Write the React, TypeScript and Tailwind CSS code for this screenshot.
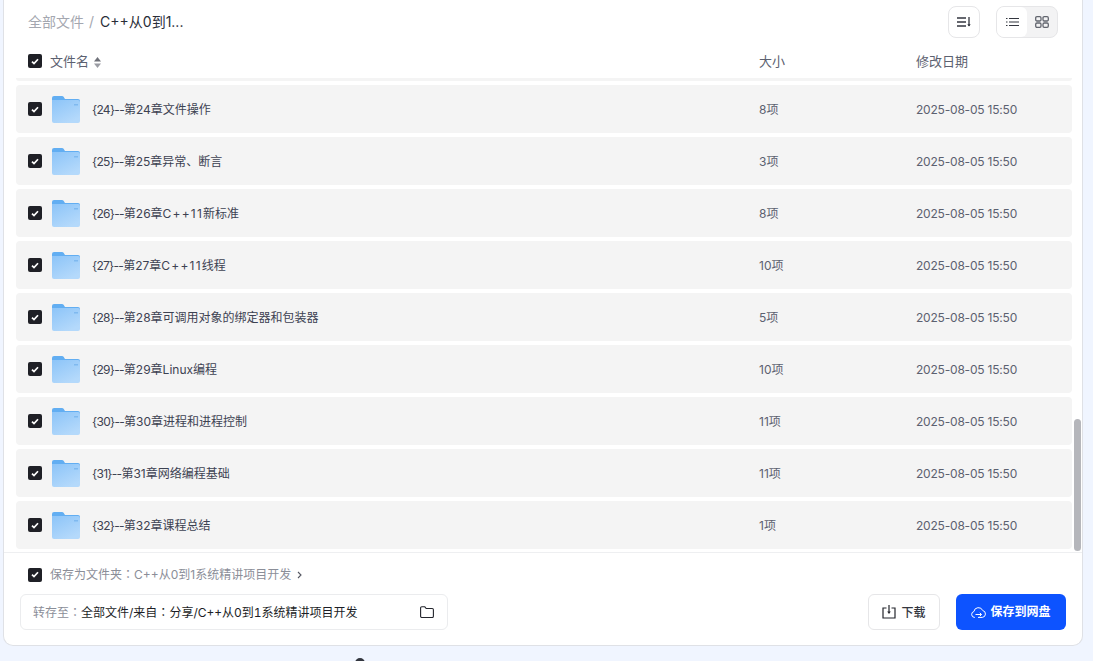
import { useState, type ReactNode } from 'react'

const FONT = "font-['Inter','Noto_Sans_CJK_SC',sans-serif]"

// digits and plus signs run wider in the reference than Inter sets them
const cpp11 = <span className="tracking-[1.2px]">C++11</span>

const rows: { id: string; name: ReactNode; size: string }[] = [
  { id: '{24}--', name: '第24章文件操作', size: '8项' },
  { id: '{25}--', name: '第25章异常、断言', size: '3项' },
  { id: '{26}--', name: <>第26章{cpp11}新标准</>, size: '8项' },
  { id: '{27}--', name: <>第27章{cpp11}线程</>, size: '10项' },
  { id: '{28}--', name: '第28章可调用对象的绑定器和包装器', size: '5项' },
  { id: '{29}--', name: '第29章Linux编程', size: '10项' },
  { id: '{30}--', name: '第30章进程和进程控制', size: '11项' },
  { id: '{31}--', name: '第31章网络编程基础', size: '11项' },
  { id: '{32}--', name: '第32章课程总结', size: '1项' },
]

function Check() {
  return (
    <span className="flex h-[14px] w-[14px] shrink-0 items-center justify-center rounded-[2px] bg-[#1f2026]">
      <svg width="8" height="7" viewBox="0 0 8 7" fill="none">
        <path d="M1 3.6L3 5.6L7 1.2" stroke="#fff" strokeWidth="1.7" />
      </svg>
    </span>
  )
}

// the TC face centres the full-width colon, as the reference does
function Colon() {
  return <span className="font-['Noto_Sans_CJK_TC',sans-serif]">：</span>
}

function FolderIcon() {
  return (
    <svg width="28" height="27" viewBox="0 0 28 27" className="shrink-0">
      <defs>
        <linearGradient id="folderFront" x1="0" y1="0" x2="0.6" y2="1">
          <stop offset="0" stopColor="#8cc4f8" />
          <stop offset="1" stopColor="#b4d9fb" />
        </linearGradient>
      </defs>
      <path d="M0 2a2 2 0 0 1 2-2h8a2 2 0 0 1 1.600.8L13 3h13a2 2 0 0 1 2 2v3H0z" fill="#62aef2" />
      <path d="M0 4h26a2 2 0 0 1 2 2v19a2 2 0 0 1-2 2H2a2 2 0 0 1-2-2z" fill="url(#folderFront)" />
      <rect x="22" y="8" width="4" height="1.500" fill="#7fb9ef" />
    </svg>
  )
}

function FileRow({ id, name, size }: { id: string; name: ReactNode; size: string }) {
  return (
    <div className="flex h-12 shrink-0 items-center rounded-[4px] bg-[#f4f4f4] pl-3">
      <Check />
      <span className="ml-[10px]"><FolderIcon /></span>
      <span className="ml-[12px] w-[667px] pt-[2px] text-xs text-[#3d4252]">
        <span className="tracking-[-0.7px]">{id}</span>{name}
      </span>
      <span className="w-[157px] pt-[2px] text-xs text-[#5c6170]">{size}</span>
      <span className="pt-[2px] text-xs tracking-[-0.2px] text-[#5c6170]">2025-08-05 15:50</span>
    </div>
  )
}

export default function App() {
  const [saveAsFolder] = useState(true)

  return (
    <div className={`${FONT} relative h-[661px] overflow-hidden bg-[#f0f5ff] pb-[15px] pl-[3px] pr-[10px]`}>
      <div className="relative flex h-full flex-col rounded-b-[10px] border border-t-0 border-[#dfe1e6] bg-white">
        <div className="flex h-[44px] shrink-0 items-center justify-between pl-6 pr-6">
          <div className="flex items-center text-sm">
            <span className="text-[#a4a7b0]">全部文件</span>
            <span className="ml-[5px] mr-[6px] text-[#a4a7b0]">/</span>
            <span className="text-[#2a2d38]">C++从0到1...</span>
          </div>
          <div className="flex items-center gap-4">
            <button className="flex h-8 w-8 items-center justify-center rounded-[8px] border border-[#e6e6e8] bg-white">
              <svg width="14" height="12" viewBox="0 0 14 12" fill="none" stroke="#33363f" strokeWidth="1.3">
                <path d="M0 2h9M0 6h9M0 10h9M12 1v9" />
                <path d="M10.3 8.3L12 10.5l1.7-2.2z" fill="#33363f" stroke="none" />
              </svg>
            </button>
            <div className="flex h-8 w-[62px] overflow-hidden rounded-[8px] border border-[#e6e6e8] bg-[#f3f3f4]">
              <span className="flex w-[30px] items-center justify-center rounded-r-[6px] bg-white">
                <svg width="13" height="10" viewBox="0 0 13 10" fill="none" stroke="#33363f" strokeWidth="1.1">
                  <path d="M3 1.5h10M3 5h10M3 8.500h10M0 1.500h1.500M0 5h1.500M0 8.500h1.500" />
                </svg>
              </span>
              <span className="flex flex-1 items-center justify-center">
                <svg width="14" height="12" viewBox="0 0 14 12" fill="none" stroke="#62656e" strokeWidth="1.3">
                  <rect x="0.7" y="0.700" width="5.300" height="4.300" rx="1.200" />
                  <rect x="8" y="0.700" width="5.300" height="4.300" rx="1.200" />
                  <rect x="0.7" y="7" width="5.300" height="4.300" rx="1.200" />
                  <rect x="8" y="7" width="5.300" height="4.300" rx="1.200" />
                </svg>
              </span>
            </div>
          </div>
        </div>

        <div className="flex h-[34px] shrink-0 items-center pl-6 text-[13px] text-[#5c6170]">
          <Check />
          <span className="ml-2 flex w-[709px] items-center gap-[5px] pt-[2px]">
            文件名
            <svg width="7" height="11" viewBox="0 0 7 11" fill="#9a9ca3">
              <path d="M3.500 0L7 4.500H0z" fill="#6f7179" />
              <path d="M3.500 11L0 6.500h7z" />
            </svg>
          </span>
          <span className="w-[157px] pt-[2px]">大小</span>
          <span className="pt-[2px]">修改日期</span>
        </div>

        <div className="flex flex-1 flex-col gap-1 overflow-hidden border-b border-[#eeeff1] pl-3 pr-[10px]">
          <div className="h-[3px] shrink-0 rounded-b-[4px] bg-[#f4f4f4]" />
          {rows.map((r) => (
            <FileRow key={r.id} id={r.id} name={r.name} size={r.size} />
          ))}
        </div>

        <div className="flex h-[92px] shrink-0 flex-col px-4">
          <div className="mt-[13px] flex items-center pl-2 text-xs text-[#8b8e98]">
            {saveAsFolder && <Check />}
            <span className="ml-2">保存为文件夹<Colon />C++从0到1系统精讲项目开发</span>
            <svg className="ml-[6px]" width="5" height="8" viewBox="0 0 5 8" fill="none" stroke="#555862" strokeWidth="1.100">
              <path d="M1 1l3 3-3 3" />
            </svg>
          </div>
          <div className="mt-[11px] flex items-center justify-between">
            <div className="flex h-9 w-[428px] items-center justify-between rounded-[6px] border border-[#ebecee] pl-3 pr-[13px] text-xs">
              <span className="text-[#1c1e26] tabular-nums"><span className="text-[#8b8e98]">转存至<Colon /></span>全部文件/来自<Colon />分享/C++从0到1系统精讲项目开发</span>
              <svg width="14" height="12" viewBox="0 0 14 12" fill="none" stroke="#23252c" strokeWidth="1.100">
                <path d="M.6 2a1.200 1.200 0 0 1 1.200-1.200h3l1.400 1.700h6a1.200 1.200 0 0 1 1.200 1.200v6.600a1.200 1.200 0 0 1-1.200 1.200H1.800A1.200 1.200 0 0 1 .6 10.300z" />
              </svg>
            </div>
            <div className="flex items-center gap-4">
              <button className="flex h-9 w-[72px] items-center justify-center gap-[5px] rounded-[6px] border border-[#e6e6e8] bg-white text-xs font-medium text-[#33363f]">
                <svg width="14" height="14" viewBox="0 0 14 14" fill="none" stroke="#23252c" strokeWidth="1.100">
                  <path d="M4.500 3H1v10h12V3H9.500M7 0v7" strokeWidth="1.200" />
                  <path d="M5.200 6.500L7 9l1.800-2.500z" fill="#23252c" stroke="none" />
                </svg>
                <span className="pt-[1px]">下载</span>
              </button>
              <button className="flex h-9 w-[110px] items-center justify-center gap-1 rounded-[6px] bg-[#0d53ff] text-xs font-bold text-white">
                <svg width="15" height="12" viewBox="0 0 15 12" fill="none" stroke="#fff" strokeWidth="1">
                  <path d="M4 11.400H3.500a3 3 0 0 1-.6-5.900A4.600 4.600 0 0 1 11.700 4.500a3.500 3.500 0 0 1-.4 6.900H7" />
                  <path d="M4.500 8.500h6M8.800 6.800l1.700 1.700-1.700 1.700" />
                </svg>
                <span>保存到网盘</span>
              </button>
            </div>
          </div>
        </div>

        <div className="absolute left-[1070px] top-[419px] h-[132px] w-[7px] rounded-full bg-[#b5b6bb]" />
      </div>
      <span className="absolute left-[355px] top-[658px] h-[10px] w-[10px] rounded-full bg-[#33363f]" />
    </div>
  )
}
